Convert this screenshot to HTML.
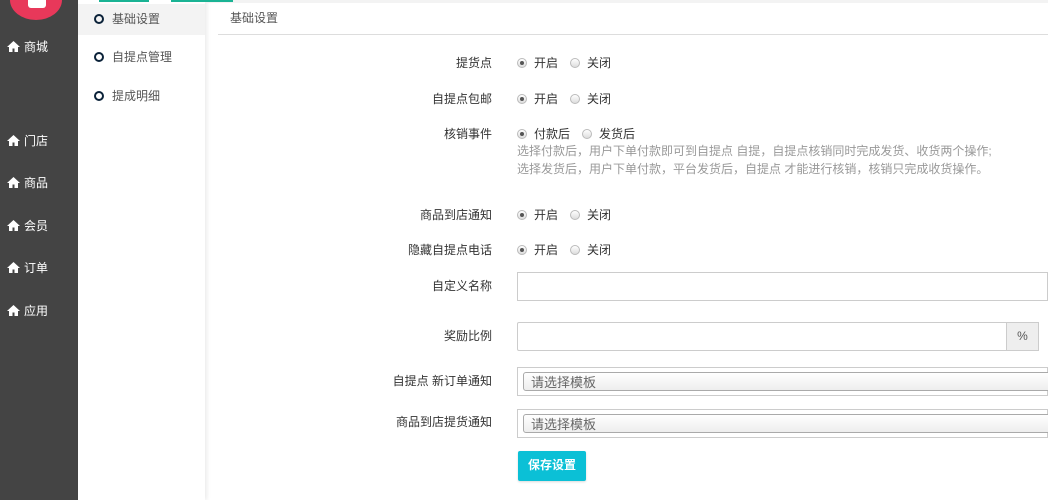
<!DOCTYPE html>
<html><head><meta charset="utf-8"><style>
*{margin:0;padding:0;box-sizing:border-box}
body{width:1048px;height:500px;overflow:hidden;background:#fff;font-family:"Liberation Sans","Noto Sans CJK SC",sans-serif;font-size:12px;color:#333;position:relative}
.a{position:absolute}
.side{left:0;top:0;width:78px;height:500px;background:#444}
.nav{left:7px;color:#fff;font-size:12px;display:flex;align-items:center;gap:4px}
.nav svg{width:13px;height:11px}
.sub{left:78px;top:0;width:127px;height:500px;background:#fff;box-shadow:2px 0 4px rgba(0,0,0,.08)}
.si{left:94px;display:flex;align-items:center;gap:8px;color:#555}
.si i{width:10px;height:10px;border:2px solid #0b2239;border-radius:50%;display:block}
.lbl{width:200px;left:292px;text-align:right;color:#333}
.r{left:517px;display:flex;align-items:center;color:#333}
.r b{width:10px;height:10px;border:1px solid #bbb;border-radius:50%;background:linear-gradient(#fff,#ddd);margin-right:7px;display:inline-block;position:relative}
.r b.on::after{content:"";position:absolute;left:2px;top:2px;width:4px;height:4px;background:#555;border-radius:50%}
.r span{margin-right:12px}
.hint{left:517px;color:#999;line-height:18px}
.inp{left:517px;width:531px;border:1px solid #ccc;background:#fff}
.sel{position:absolute;left:5px;top:4px;right:-5px;bottom:4px;border:1px solid #aaa;border-radius:3px;background:linear-gradient(#fff,#eee);color:#666;padding-left:7px;line-height:19px;font-size:13px}
</style></head><body>
<div class="a side"></div>
<div class="a" style="left:10px;top:-20px;width:52px;height:40px;border-radius:50%;background:#e8385a"></div>
<div class="a" style="left:28px;top:0px;width:18px;height:8px;background:#fff;border-radius:0 0 3px 3px"></div>
<div class="a nav" style="top:38px"><svg viewBox="0 0 13 11"><path d="M6.5 0L0 6h2v5h3.5V7.5h2V11H11V6h2z" fill="#fff"/></svg>商城</div>
<div class="a nav" style="top:132px"><svg viewBox="0 0 13 11"><path d="M6.5 0L0 6h2v5h3.5V7.5h2V11H11V6h2z" fill="#fff"/></svg>门店</div>
<div class="a nav" style="top:174px"><svg viewBox="0 0 13 11"><path d="M6.5 0L0 6h2v5h3.5V7.5h2V11H11V6h2z" fill="#fff"/></svg>商品</div>
<div class="a nav" style="top:217px"><svg viewBox="0 0 13 11"><path d="M6.5 0L0 6h2v5h3.5V7.5h2V11H11V6h2z" fill="#fff"/></svg>会员</div>
<div class="a nav" style="top:259px"><svg viewBox="0 0 13 11"><path d="M6.5 0L0 6h2v5h3.5V7.5h2V11H11V6h2z" fill="#fff"/></svg>订单</div>
<div class="a nav" style="top:302px"><svg viewBox="0 0 13 11"><path d="M6.5 0L0 6h2v5h3.5V7.5h2V11H11V6h2z" fill="#fff"/></svg>应用</div>
<div class="a sub"></div>
<div class="a" style="left:78px;top:4px;width:127px;height:31px;background:#f3f3f3"></div>
<div class="a" style="left:205px;top:0;width:843px;height:3px;background:#f3f3f3"></div>
<div class="a" style="left:99px;top:0;width:50px;height:2px;background:#1ab394"></div>
<div class="a" style="left:171px;top:0;width:62px;height:2px;background:#1ab394"></div>
<div class="a si" style="top:10px"><i></i>基础设置</div>
<div class="a si" style="top:48px"><i></i>自提点管理</div>
<div class="a si" style="top:87px"><i></i>提成明细</div>
<div class="a" style="left:230px;top:9px;color:#555">基础设置</div>
<div class="a" style="left:218px;top:34px;width:830px;height:1px;background:#ddd"></div>

<div class="a lbl" style="top:54px">提货点</div>
<div class="a r" style="top:54px"><b class="on"></b><span>开启</span><b></b><span>关闭</span></div>
<div class="a lbl" style="top:90px">自提点包邮</div>
<div class="a r" style="top:90px"><b class="on"></b><span>开启</span><b></b><span>关闭</span></div>
<div class="a lbl" style="top:125px">核销事件</div>
<div class="a r" style="top:125px"><b class="on"></b><span>付款后</span><b></b><span>发货后</span></div>
<div class="a hint" style="top:142px">选择付款后，用户下单付款即可到自提点 自提，自提点核销同时完成发货、收货两个操作;<br>选择发货后，用户下单付款，平台发货后，自提点 才能进行核销，核销只完成收货操作。</div>
<div class="a lbl" style="top:206px">商品到店通知</div>
<div class="a r" style="top:206px"><b class="on"></b><span>开启</span><b></b><span>关闭</span></div>
<div class="a lbl" style="top:241px">隐藏自提点电话</div>
<div class="a r" style="top:241px"><b class="on"></b><span>开启</span><b></b><span>关闭</span></div>
<div class="a lbl" style="top:277px">自定义名称</div>
<div class="a inp" style="top:272px;height:29px"></div>
<div class="a lbl" style="top:327px">奖励比例</div>
<div class="a inp" style="top:322px;width:522px;height:29px;border-radius:2px"></div>
<div class="a" style="left:1006px;top:322px;width:33px;height:29px;background:#eee;border:1px solid #ccc;color:#555;text-align:center;line-height:27px">%</div>
<div class="a lbl" style="top:372px">自提点 新订单通知</div>
<div class="a inp" style="top:367px;height:29px"><div class="sel">请选择模板</div></div>
<div class="a lbl" style="top:413px">商品到店提货通知</div>
<div class="a inp" style="top:409px;height:29px"><div class="sel">请选择模板</div></div>
<div class="a" style="left:518px;top:451px;width:68px;height:30px;background:#0bc0d6;color:#fff;font-weight:bold;text-align:center;line-height:28px;border-radius:2px;box-shadow:0 1px 2px rgba(0,0,0,.15)">保存设置</div>
</body></html>
